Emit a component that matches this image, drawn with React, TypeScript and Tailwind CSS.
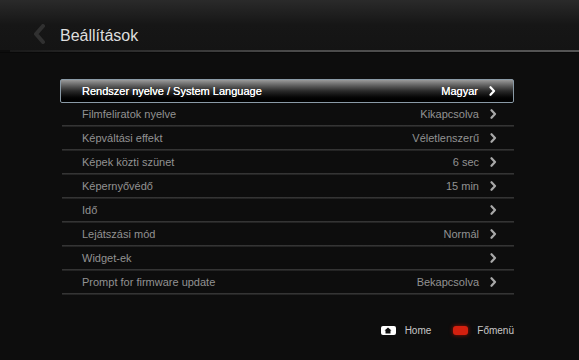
import React from "react";

const rows: [string, string][] = [
  ["Rendszer nyelve / System Language", "Magyar"],
  ["Filmfeliratok nyelve", "Kikapcsolva"],
  ["Képváltási effekt", "Véletlenszerű"],
  ["Képek közti szünet", "6 sec"],
  ["Képernyővédő", "15 min"],
  ["Idő", ""],
  ["Lejátszási mód", "Normál"],
  ["Widget-ek", ""],
  ["Prompt for firmware update", "Bekapcsolva"],
];

function Chevron({ color }: { color: string }) {
  return (
    <svg width="7" height="10" viewBox="0 0 7 10" className="ml-[11px] mr-[17px]">
      <path d="M1.5 1.2 L5 5 L1.5 8.8" fill="none" stroke={color} strokeWidth="2.2" strokeLinecap="round" strokeLinejoin="round" />
    </svg>
  );
}

export default function App() {
  return (
    <div
      className="w-[579px] h-[360px] bg-[#0d0d0d] overflow-hidden flex flex-col"
      style={{ fontFamily: '"Liberation Sans", Arial, sans-serif' }}
    >
      {/* Header */}
      <div className="h-[50px] bg-gradient-to-b from-[#2a2a2a] via-[#161616] to-[#141414] flex items-end pb-[6px]">
        <svg width="14" height="20" viewBox="0 0 14 20" className="ml-[33px] mb-[0px]">
          <path d="M10 2 L3 10 L10 18" fill="none" stroke="#303030" strokeWidth="4" strokeLinecap="round" strokeLinejoin="round" />
        </svg>
        <div className="ml-[13px] text-[16px] leading-none text-[#dedede]">Beállítások</div>
      </div>
      <div className="h-[2px] bg-gradient-to-r from-[#1a1a1a] via-[#4a4a4a] to-[#555] ml-[10px]" />
      <div className="h-[1px] bg-[#080808]" />

      {/* List */}
      <div className="ml-[60px] w-[454px] mt-[26px] flex flex-col">
        {rows.map(([label, value], i) => {
          const sel = i === 0;
          if (sel) {
            return (
              <div
                key={i}
                className="h-[24px] flex items-center border border-[#8a9aa6] rounded-[2px] bg-gradient-to-b from-[#9a9a9a] via-[#2a2a2a] to-[#000] text-[11px] text-white [text-shadow:0_0_0.6px_#fff]"
              >
                <span className="ml-[21px] flex-1">{label}</span>
                <span>{value}</span>
                <Chevron color="#ffffff" />
              </div>
            );
          }
          return (
            <div key={i} className="flex flex-col">
              <div className="h-[22px] flex items-center text-[11px] text-[#929292]">
                <span className="ml-[22px] flex-1">{label}</span>
                <span>{value}</span>
                <Chevron color="#a8a8a8" />
              </div>
              <div className="h-[2px] ml-[2px] bg-gradient-to-b from-[#3c3c3c] to-[#1c1c1c]" />
            </div>
          );
        })}
      </div>

      {/* Footer */}
      <div className="mt-[28px] flex items-center justify-end pr-[65px] text-[10px] text-[#c8c8c8]">
        <div className="w-[15px] h-[9px] bg-white rounded-[2px] flex items-center justify-center">
          <svg width="8" height="7" viewBox="0 0 8 7">
            <path d="M4 0.5 L7.5 3.5 H6.5 V6.5 H1.5 V3.5 H0.5 Z" fill="#111" />
          </svg>
        </div>
        <span className="ml-[9px]">Home</span>
        <div className="ml-[22px] w-[15px] h-[9px] bg-[#d4200f] rounded-[3px] shadow-[0_0_4px_#a01000]" />
        <span className="ml-[9px]">Főmenü</span>
      </div>
    </div>
  );
}
